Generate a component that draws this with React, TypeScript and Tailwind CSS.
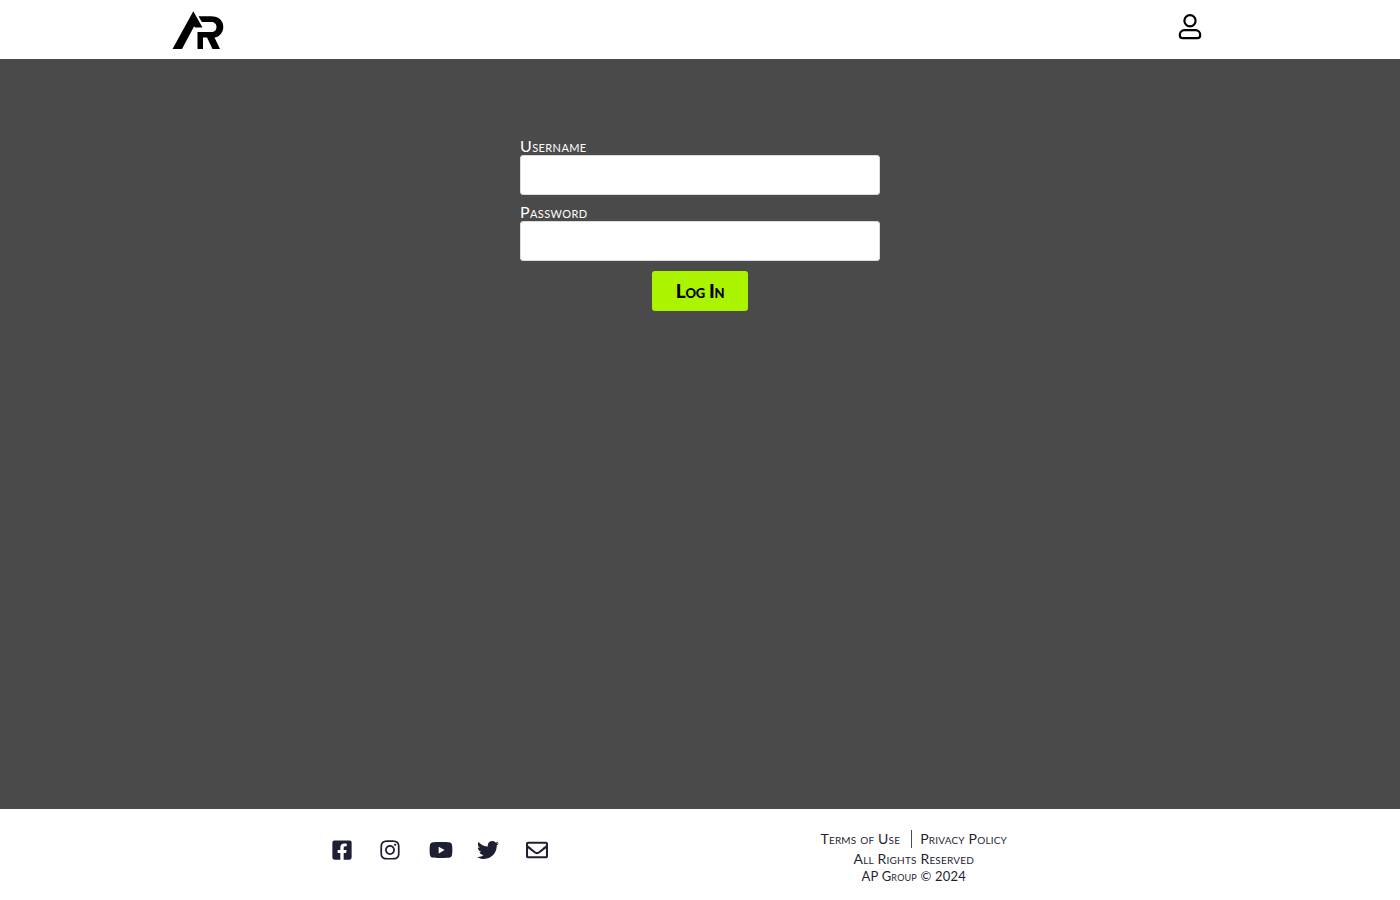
import { FaFacebookSquare, FaInstagram, FaYoutube, FaTwitter, FaRegEnvelope } from "react-icons/fa";

function Logo() {
  return (
    <svg width="52" height="40" viewBox="0 0 52 40" fill="#000">
      <path d="M21.3 1.3 L0.5 39 L10 39 L22 16.5 L23.5 17.5 L30.5 17.5 Z" />
      <path d="M26.5 6.3 L39 6.3 C47 6.3 51.3 11 51.3 17 C51.3 22.5 47.5 26.8 42.5 27.6 L48 39 L40.5 39 L35 27.6 L31 27.6 L31 39 L25.5 39 L25.5 22 L39 22 C42.5 22 44.5 20 44.5 17 C44.5 14 42.5 12 39 12 L29.8 12 Z" />
    </svg>
  );
}

function UserIcon() {
  return (
    <svg width="24" height="26" viewBox="0 0 24 26" fill="none" stroke="#000" strokeWidth="2.2">
      <circle cx="12" cy="6.8" r="5.6" />
      <path d="M6.5 16.2 H17.5 C20.5 16.2 22.2 18.5 22.2 21 C22.2 23.2 21.3 24.2 19.5 24.2 H4.5 C2.7 24.2 1.8 23.2 1.8 21 C1.8 18.5 3.5 16.2 6.5 16.2 Z" />
    </svg>
  );
}

export default function App() {
  return (
    <div className="flex min-h-[900px] flex-col bg-white font-['Lato',sans-serif] [font-variant:small-caps]">
      <header className="flex h-[59px] items-start justify-between bg-white pl-[172px] pr-[198px]">
        <div className="mt-[10px]">
          <Logo />
        </div>
        <div className="mt-[14px]">
          <UserIcon />
        </div>
      </header>

      <main className="flex h-[750px] flex-col items-center bg-[#4a4a4a] pt-[79px]">
        <form className="flex w-[360px] flex-col">
          <label className="h-[17px] text-[16px] leading-[15px] tracking-[0.4px] text-white">Username</label>
          <input className="h-10 w-full rounded-[3px] border border-[#dbdbdb] bg-white" />
          <label className="mt-[10px] h-[16px] text-[16px] leading-[13px] tracking-[0.4px] text-white">Password</label>
          <input className="h-10 w-full rounded-[3px] border border-[#dbdbdb] bg-white" />
          <button type="button" className="mt-[10px] h-10 w-24 self-center rounded-[3px] bg-[#aaf400] text-[19px] font-black tracking-[-0.3px] text-black [font-variant:small-caps]">
            Log In
          </button>
        </form>
      </main>

      <footer className="flex h-[91px] items-start bg-white text-[#1f1f33]">
        <div className="ml-[331px] mt-[29px] grid grid-cols-[repeat(5,48.75px)] items-center text-[22px]">
          <FaFacebookSquare />
          <FaInstagram className="-ml-px" />
          <FaYoutube className="text-[24px]" />
          <FaTwitter />
          <FaRegEnvelope />
        </div>
        <div className="ml-[189px] mt-[20px] flex w-[300px] flex-col items-center text-[14px] leading-[17px] tracking-[0.2px]">
          <div className="flex h-[19px] items-center">
            <span>Terms of Use</span>
            <span className="ml-[11px] mr-[8px] h-[18px] w-px bg-[#4a4a5a]" />
            <span>Privacy Policy</span>
          </div>
          <div className="mt-[2px]">All Rights Reserved</div>
          <div className="mt-px text-[13px]">AP Group © 2024</div>
        </div>
      </footer>
    </div>
  );
}
